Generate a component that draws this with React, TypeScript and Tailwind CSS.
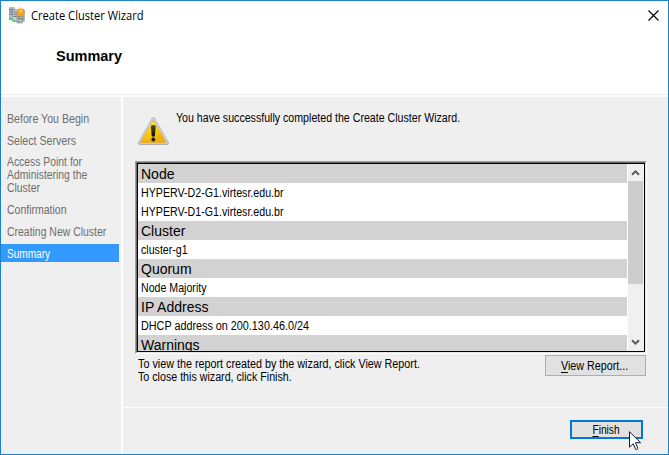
import React from "react";

const squeeze = "inline-block origin-left whitespace-nowrap";

const steps: { lines: string[]; fit: string; item: string }[] = [
  { lines: ["Before You Begin"], fit: "scale-x-[0.885]", item: "" },
  { lines: ["Select Servers"], fit: "scale-x-[0.885]", item: "-mb-px" },
  { lines: ["Access Point for", "Administering the", "Cluster"], fit: "scale-x-[0.865]", item: "" },
  { lines: ["Confirmation"], fit: "scale-x-[0.875]", item: "" },
  { lines: ["Creating New Cluster"], fit: "scale-x-[0.87]", item: "" },
];

const rows: { text: string; heading?: boolean; fit?: string }[] = [
  { text: "Node", heading: true },
  { text: "HYPERV-D2-G1.virtesr.edu.br", fit: "scale-x-[0.888]" },
  { text: "HYPERV-D1-G1.virtesr.edu.br", fit: "scale-x-[0.888]" },
  { text: "Cluster", heading: true },
  { text: "cluster-g1", fit: "scale-x-[0.885]" },
  { text: "Quorum", heading: true },
  { text: "Node Majority", fit: "scale-x-[0.885]" },
  { text: "IP Address", heading: true },
  { text: "DHCP address on 200.130.46.0/24", fit: "scale-x-[0.9]" },
  { text: "Warnings", heading: true },
];

function ClusterIcon() {
  return (
    <svg width="17" height="17" viewBox="0 0 17 17">
      <g stroke="#7b8791" strokeWidth="0.6">
        <rect x="0.4" y="0.8" width="5" height="12" fill="#b4bec5" />
        <rect x="10" y="3" width="5.2" height="11" fill="#a3adb5" />
        <rect x="3.8" y="2.8" width="5.2" height="12" fill="#c6ced4" />
        <rect x="8" y="5" width="5.600" height="11" fill="#b0bac1" />
      </g>
      <path d="M1 2.800h3M1 5h2.400M1 7.200h2.400M4.600 5h3.600M4.600 7.200h3M4.600 9.400h3M8.800 9.400h3.800M8.800 11.600h3.800" stroke="#5b6872" strokeWidth="0.9" />
      <path d="M1.200 11.600h1.500M4.800 13.500h1.600M9.200 14.600h1.600M13.800 12.500h1" stroke="#35c635" strokeWidth="1.200" />
      <path d="M11.500 0l1.200 2.200 2.600-.8-.6 2.400 2 1.400-2.100 1.200.5 2.700-2.500-.8-1.400 2.100-1.100-2.300-2.600.3 1-2.300L6.800 4.400l2.300-.8-.1-2.400 1.900 1z" fill="#f7a11b" />
      <circle cx="11.700" cy="4.600" r="1.900" fill="#ffc845" />
    </svg>
  );
}

function WarningIcon() {
  return (
    <svg width="32" height="29" viewBox="0 0 32 29">
      <defs>
        <linearGradient id="amber" x1="0" y1="0" x2="0.35" y2="1">
          <stop offset="0" stopColor="#fff04a" />
          <stop offset="0.5" stopColor="#fbd80c" />
          <stop offset="1" stopColor="#f5ac0c" />
        </linearGradient>
        <linearGradient id="ink" x1="0" y1="0" x2="0" y2="1">
          <stop offset="0" stopColor="#4a4a3c" />
          <stop offset="1" stopColor="#0c0c0c" />
        </linearGradient>
      </defs>
      <path d="M13.600 1.400Q15.300-1 17 1.400L30.600 25Q31.600 27.600 29 27.900H2Q-.8 27.600.4 25z" fill="#adadad" />
      <path d="M13.900 2Q15.300.1 16.700 2L29.800 25Q30.400 26.500 28.700 26.700H2.300Q.6 26.500 1.200 25z" fill="#d3d5d8" />
      <path d="M15.300 3.200L28 25.400H2.600z" fill="url(#amber)" stroke="#dca512" strokeWidth="0.700" />
      <path d="M12.900 9Q15.300 7.200 17.700 9L16.900 19Q15.300 20.400 13.700 19z" fill="url(#ink)" />
      <circle cx="15.300" cy="22.500" r="1.900" fill="#1c1a10" />
    </svg>
  );
}

function Chevron({ d }: { d: string }) {
  return (
    <svg width="9" height="7" viewBox="0 0 9 7">
      <path d={d} fill="none" stroke="#5a5a5a" strokeWidth="2" />
    </svg>
  );
}

export default function App() {
  return (
    <div className="relative flex h-[455px] w-[669px] flex-col overflow-hidden border border-[#1a80c8] bg-white font-['Liberation_Sans',Arial,sans-serif] text-[12px] leading-[13px] text-black">
      <header className="h-[93px] shrink-0">
        <div className="flex h-[30px] items-start justify-between pr-[9px] pl-2">
          <div className="flex">
            <div className="pt-[6px]">
              <ClusterIcon />
            </div>
            <h1 className={`${squeeze} ml-[5px] scale-x-[0.928] pt-[7px] font-['Open_Sans',sans-serif] text-[12px] leading-4`}>
              Create Cluster Wizard
            </h1>
          </div>
          <button className="pt-[9px]" aria-label="Close">
            <svg width="11" height="11" viewBox="0 0 11 11">
              <path d="M.5.5l10 10M10.500.5l-10 10" stroke="#000" strokeWidth="1.150" />
            </svg>
          </button>
        </div>
        <h2 className="ml-[55px] inline-block origin-left scale-x-[1.035] pt-[17px] text-[14px] leading-4 font-bold">Summary</h2>
      </header>
      <div className="h-px shrink-0 bg-[#ececec]" />
      <div className="flex min-h-0 flex-1 gap-[2px] pt-[2px]">
        <nav className="flex w-[120px] flex-col gap-1 bg-[#efefef] pt-3 text-[#6d6d6d]">
          {steps.map((step) => (
            <div key={step.lines[0]} className={`flex flex-col items-start pt-1 pb-px pl-[6px] ${step.item}`}>
              {step.lines.map((line) => (
                <span key={line} className={`${squeeze} ${step.fit}`}>
                  {line}
                </span>
              ))}
            </div>
          ))}
          <div className="mr-[2px] bg-[#3399ff] pt-1 pb-px pl-[6px] text-white">
            <span className={`${squeeze} block scale-x-[0.84]`}>Summary</span>
          </div>
        </nav>
        <div className="flex flex-1 flex-col gap-px">
          <main className="h-[310px] bg-[#efefef] pl-3">
            <div className="flex h-16">
              <div className="w-[41px] pt-5 pl-[3px]">
                <WarningIcon />
              </div>
              <p className={`${squeeze} scale-x-[0.885] pt-[15px]`}>You have successfully completed the Create Cluster Wizard.</p>
            </div>
            <div className="h-[193px] w-[512px] border border-t-[#a0a0a0] border-r-white border-b-white border-l-[#a0a0a0]">
              <div className="h-full border border-t-[#696969] border-r-[#e3e3e3] border-b-[#e3e3e3] border-l-[#696969]">
                <div className="flex h-full border border-black bg-white">
                  <div className="mr-px flex-1 overflow-hidden">
                    {rows.map((row) =>
                      row.heading ? (
                        <div key={row.text} className="h-[19px] bg-[#d2d2d2] pt-[2px] pl-[3px] text-[14px] leading-4">
                          {row.text}
                        </div>
                      ) : (
                        <div key={row.text} className="h-[19px] pt-1 pl-[3px]">
                          <span className={`${squeeze} block ${row.fit}`}>{row.text}</span>
                        </div>
                      ),
                    )}
                  </div>
                  <div className="flex w-4 flex-col bg-[#f0f0f0] pr-px">
                    <div className="flex h-[17px] items-center justify-center">
                      <Chevron d="M1 5.800L4.500 2.300 8 5.800" />
                    </div>
                    <div className="h-[103px] bg-[#cdcdcd]" />
                    <div className="mt-auto flex h-[17px] items-center justify-center">
                      <Chevron d="M1 1.200L4.500 4.700 8 1.200" />
                    </div>
                  </div>
                </div>
              </div>
            </div>
            <div className="flex w-[511px] items-start justify-between pl-[3px]">
              <div className="flex flex-col items-start pt-1">
                <span className={`${squeeze} scale-x-[0.898]`}>To view the report created by the wizard, click View Report.</span>
                <span className={`${squeeze} scale-x-[0.89]`}>To close this wizard, click Finish.</span>
              </div>
              <button className="mt-px flex h-[21px] w-[101px] shrink-0 items-center justify-center border border-[#adadad] bg-[#e1e1e1] pt-[2px] pr-[2px]">
                <span className="scale-x-[0.895] whitespace-nowrap">
                  <span className="underline underline-offset-2">V</span>iew Report...
                </span>
              </button>
            </div>
          </main>
          <footer className="flex flex-1 justify-end bg-[#efefef] pt-3 pr-[25px]">
            <button className="flex h-[19px] w-[73px] items-center justify-center border-2 border-[#0078d7] bg-[#e1e1e1] pt-[2px]">
              <span className="scale-x-[0.85] whitespace-nowrap">
                <span className="underline underline-offset-2">F</span>inish
              </span>
            </button>
          </footer>
        </div>
      </div>
      <svg className="absolute top-[430px] left-[628px]" width="13" height="20" viewBox="0 0 13 20">
        <path d="M.5.700V16.200L4.200 12.700 6.600 18.300Q7.900 19.200 8.900 17.500L6.500 11.700H11.600z" fill="#fff" stroke="#1a1a2a" strokeWidth="1" />
      </svg>
    </div>
  );
}
